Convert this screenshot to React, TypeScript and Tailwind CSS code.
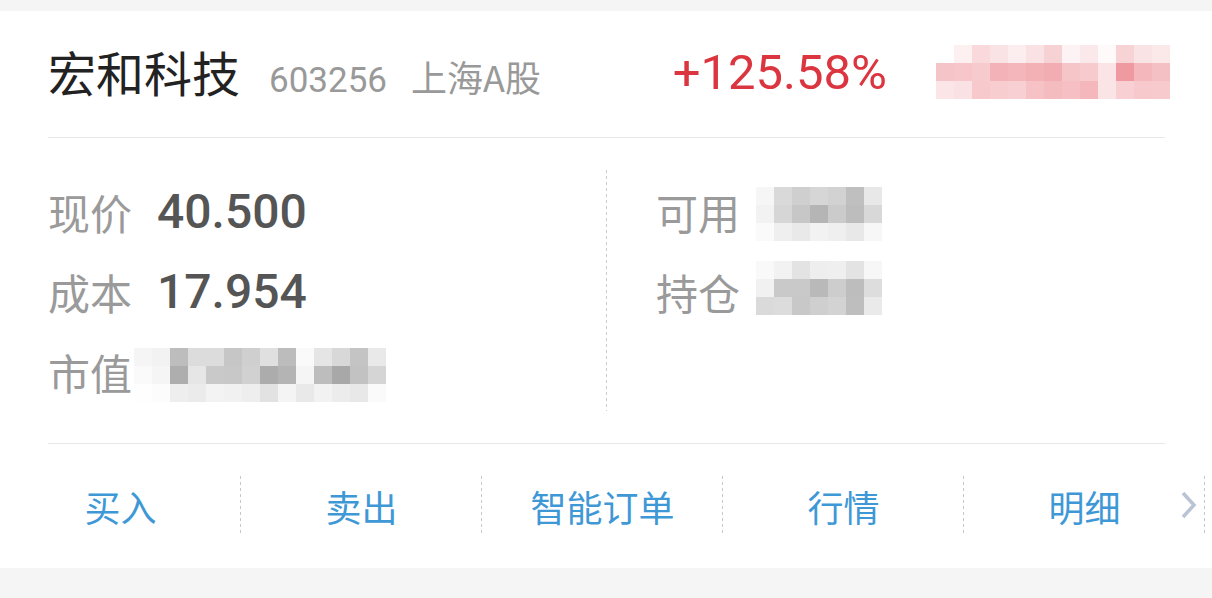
import React from "react";

const cjk = "font-['Noto_Sans_CJK_SC','Noto_Sans',sans-serif]";
const num = "font-['Roboto','Noto_Sans_CJK_SC',sans-serif]";

const headerCells = [
  ["#ffffff", "#fdf0f1", "#f9d9dc", "#fae3e5", "#fcedee", "#fae1e3", "#f7d2d5", "#fdf3f4", "#fbe8ea", "#fefafa", "#f7d3d6", "#fae3e5", "#fbe9ea"],
  ["#f5c4c8", "#f6c6ca", "#f7cbce", "#f3b2b7", "#f4b6ba", "#f3b0b5", "#f2adb2", "#f6c5c8", "#f7cacd", "#fbe4e6", "#ef9aa0", "#f4b7bb", "#f5c0c4"],
  ["#fbe5e7", "#fae1e3", "#f7c9cc", "#f8cdd0", "#f8d0d3", "#f6c2c5", "#f5bcc0", "#f5bfc3", "#f4b8bc", "#fbe4e6", "#f8cfd2", "#f7c9cc", "#f7cbce"],
];

const valueCells = [
  ["#f5f5f5", "#f2f2f2", "#bdbdbd", "#dcdcdc", "#dcdcdc", "#c6c6c6", "#cfcfcf", "#e0e0e0", "#bcbcbc", "#fafafa", "#e5e5e5", "#d8d8d8", "#c4c4c4", "#e9e9e9"],
  ["#fafafa", "#f5f5f5", "#aeaeae", "#e6e6e6", "#c9c9c9", "#c8c8c8", "#d1d1d1", "#acacac", "#b4b4b4", "#f5f5f5", "#bdbdbd", "#a8a8a8", "#c2c2c2", "#d5d5d5"],
  ["#fefefe", "#fcfcfc", "#eeeeee", "#ebebeb", "#f3f3f3", "#f1f1f1", "#eeeeee", "#e2e2e2", "#f4f4f4", "#e9e9e9", "#f2f2f2", "#ececec", "#e8e8e8", "#fafafa"],
];

const availCells = [
  ["#f6f6f6", "#d9d9d9", "#cfcfcf", "#d6d6d6", "#d2d2d2", "#bfbfbf", "#e8e8e8"],
  ["#f2f2f2", "#d6d6d6", "#c7c7c7", "#b5b5b5", "#cbcbcb", "#bdbdbd", "#d8d8d8"],
  ["#fafafa", "#efefef", "#e9e9e9", "#f2f2f2", "#efefef", "#e8e8e8", "#f7f7f7"],
];

const holdCells = [
  ["#f9f9f9", "#f2f2f2", "#e3e3e3", "#eeeeee", "#efefef", "#e3e3e3", "#f7f7f7"],
  ["#f1f1f1", "#c9c9c9", "#c9c9c9", "#b9b9b9", "#cdcdcd", "#bdbdbd", "#dddddd"],
  ["#dadada", "#dcdcdc", "#c8c8c8", "#cfcfcf", "#d3d3d3", "#bebebe", "#eaeaea"],
];

function Mosaic({ cells, size = 18, className }: { cells: string[][]; size?: number; className?: string }) {
  const w = cells[0].length * size;
  const h = cells.length * size;
  return (
    <svg width={w} height={h} className={className} shapeRendering="crispEdges">
      {cells.map((row, r) =>
        row.map((c, i) => <rect key={`${r}-${i}`} x={i * size} y={r * size} width={size} height={size} fill={c} />)
      )}
    </svg>
  );
}

function Field({ label, children }: { label: string; children?: React.ReactNode }) {
  return (
    <div className="flex h-[80px] items-center">
      <span className={`${cjk} text-[42px] leading-none text-[#9a9a9a]`}>{label}</span>
      {children}
    </div>
  );
}

const actions = ["买入", "卖出", "智能订单", "行情", "明细"];

export default function App() {
  return (
    <div className="h-[598px] w-[1212px] overflow-hidden bg-[#f5f5f5] pt-[11px]">
      <div className="bg-white">
        {/* title row */}
        <div className="flex h-[126px] items-center pb-[4px] pl-[48px] pr-[42px]">
          <div className="flex items-baseline">
            <span className={`${cjk} text-[48px] leading-none text-[#222]`}>宏和科技</span>
            <span className={`${num} ml-[29px] text-[35px] leading-none text-[#999]`}>603256</span>
            <span className={`${cjk} ml-[24px] text-[36px] leading-none text-[#999]`}>上海A股</span>
          </div>
          <span className={`${num} ml-auto text-[49px] leading-none text-[#db3540]`}>+125.58%</span>
          <Mosaic cells={headerCells} className="ml-[49px]" />
        </div>
        <div className="ml-[48px] mr-[47px] h-px bg-[#e8e8e8]" />

        {/* holding info */}
        <div className="flex h-[305px]">
          <div className="flex w-[606px] flex-col pl-[48px] pt-[34px]">
            <Field label="现价">
              <span className={`${num} ml-[25px] text-[48px] font-medium leading-none text-[#555]`}>40.500</span>
            </Field>
            <Field label="成本">
              <span className={`${num} ml-[25px] text-[48px] font-medium leading-none text-[#555]`}>17.954</span>
            </Field>
            <Field label="市值">
              <Mosaic cells={valueCells} className="ml-[2px] mt-[6px]" />
            </Field>
          </div>
          <div className="my-[32px] w-px bg-[linear-gradient(#cccccc_50%,transparent_50%)] bg-[length:1px_6px]" />
          <div className="flex flex-col pl-[49px] pt-[34px]">
            <Field label="可用">
              <Mosaic cells={availCells} className="ml-[16px] mt-[4px]" />
            </Field>
            <Field label="持仓">
              <Mosaic cells={holdCells} className="ml-[16px] mt-[-8px]" />
            </Field>
          </div>
        </div>
        <div className="ml-[48px] mr-[47px] h-px bg-[#e8e8e8]" />

        {/* actions */}
        <div className="flex h-[124px] items-center">
          {actions.map((a, i) => (
            <div key={a} className="relative flex h-[60px] w-[241px] items-center justify-center">
              <span className={`${cjk} text-[36px] leading-none text-[#3f98d6]`}>{a}</span>
              {i === actions.length - 1 && (
                <svg width="16" height="28" viewBox="0 0 16 28" className="absolute right-[8px] top-[15px]">
                  <path d="M2 2 L13 14 L2 26" fill="none" stroke="#b8c4d4" strokeWidth="3.5" />
                </svg>
              )}
              <div className="absolute right-0 top-0 h-full w-px bg-[linear-gradient(#c8c8c8_50%,transparent_50%)] bg-[length:1px_6px]" />
            </div>
          ))}
        </div>
      </div>
    </div>
  );
}
